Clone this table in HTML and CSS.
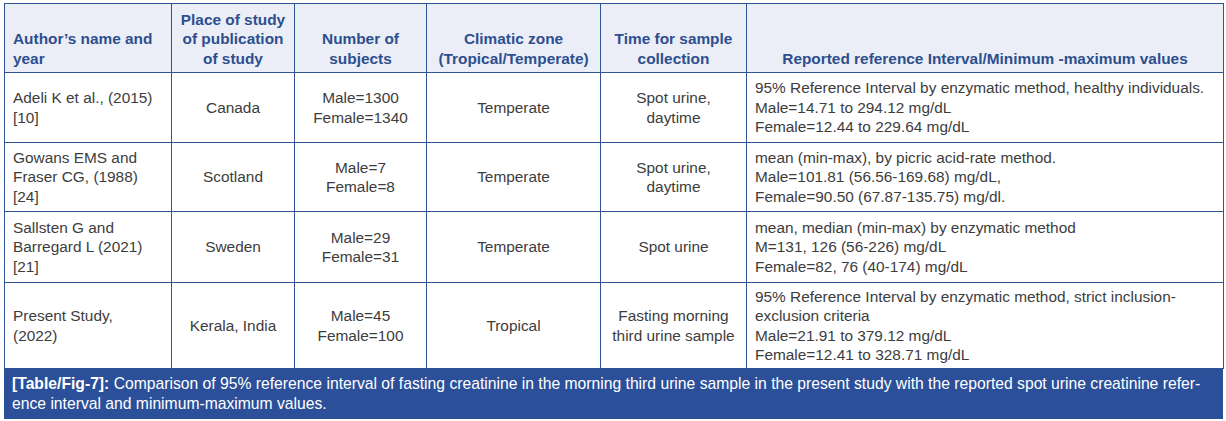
FILE: index.html
```html
<!DOCTYPE html>
<html>
<head>
<meta charset="utf-8">
<link rel="stylesheet" href="styles.css">
</head>
<body>
<div class="wrap">
<table class="data">
  <colgroup>
    <col class="c1"><col class="c2"><col class="c3"><col class="c4"><col class="c5"><col class="c6">
  </colgroup>
  <thead>
    <tr>
      <th class="left">Author’s name and year</th>
      <th>Place of study of publication of study</th>
      <th>Number of subjects</th>
      <th>Climatic zone (Tropical/Temperate)</th>
      <th>Time for sample collection</th>
      <th>Reported reference Interval/Minimum -maximum values</th>
    </tr>
  </thead>
  <tbody>
    <tr class="r1">
      <td class="left">Adeli K et al., (2015)<br>[10]</td>
      <td>Canada</td>
      <td>Male=1300<br>Female=1340</td>
      <td>Temperate</td>
      <td>Spot urine,<br>daytime</td>
      <td class="left">95% Reference Interval by enzymatic method, healthy individuals.<br>Male=14.71 to 294.12 mg/dL<br>Female=12.44 to 229.64 mg/dL</td>
    </tr>
    <tr class="r2">
      <td class="left">Gowans EMS and<br>Fraser CG, (1988)<br>[24]</td>
      <td>Scotland</td>
      <td>Male=7<br>Female=8</td>
      <td>Temperate</td>
      <td>Spot urine,<br>daytime</td>
      <td class="left">mean (min-max), by picric acid-rate method.<br>Male=101.81 (56.56-169.68) mg/dL,<br>Female=90.50 (67.87-135.75) mg/dl.</td>
    </tr>
    <tr class="r3">
      <td class="left">Sallsten G and<br>Barregard L (2021)<br>[21]</td>
      <td>Sweden</td>
      <td>Male=29<br>Female=31</td>
      <td>Temperate</td>
      <td>Spot urine</td>
      <td class="left">mean, median (min-max) by enzymatic method<br>M=131, 126 (56-226) mg/dL<br>Female=82, 76 (40-174) mg/dL</td>
    </tr>
    <tr class="r4">
      <td class="left">Present Study,<br>(2022)</td>
      <td>Kerala, India</td>
      <td>Male=45<br>Female=100</td>
      <td>Tropical</td>
      <td>Fasting morning<br>third urine sample</td>
      <td class="left">95% Reference Interval by enzymatic method, strict inclusion-<br>exclusion criteria<br>Male=21.91 to 379.12 mg/dL<br>Female=12.41 to 328.71 mg/dL</td>
    </tr>
  </tbody>
</table>
<div class="caption"><b>[Table/Fig-7]:</b> Comparison of 95% reference interval of fasting creatinine in the morning third urine sample in the present study with the reported spot urine creatinine refer-<br>ence interval and minimum-maximum values.</div>
</div>
</body>
</html>
```
FILE: styles.css
```css
html, body {
  margin: 0;
  padding: 0;
  background: #ffffff;
}
.wrap {
  padding: 3px 0 0 4px;
  width: 1219px;
  font-family: "Liberation Sans", Arial, sans-serif;
}
.data {
  border-collapse: collapse;
  table-layout: fixed;
  width: 1219px;
  font-size: 15.4px;
  line-height: 19.5px;
  color: #3d3d3d;
}
.c1 { width: 167px; }
.c2 { width: 123px; }
.c3 { width: 132px; }
.c4 { width: 174px; }
.c5 { width: 146px; }
.c6 { width: 477px; }
.data th, .data td {
  border: 1px solid #2f5496;
  text-align: center;
  padding: 0 8px;
}
.data th {
  background: #eceef7;
  color: #2d4f8e;
  font-weight: bold;
  vertical-align: bottom;
  padding-bottom: 4px;
  height: 64px;
}
.data td {
  vertical-align: middle;
}
.data .left {
  text-align: left;
}
.r1 td { height: 69px; }
.r2 td { height: 68px; }
.r3 td { height: 70px; }
.r4 td { height: 85px; }
.caption {
  background: #2c4f99;
  color: #ffffff;
  font-size: 15.7px;
  line-height: 19.5px;
  padding: 5px 8px 6px;
  height: 39px;
}
.caption b {
  font-weight: bold;
}
```
